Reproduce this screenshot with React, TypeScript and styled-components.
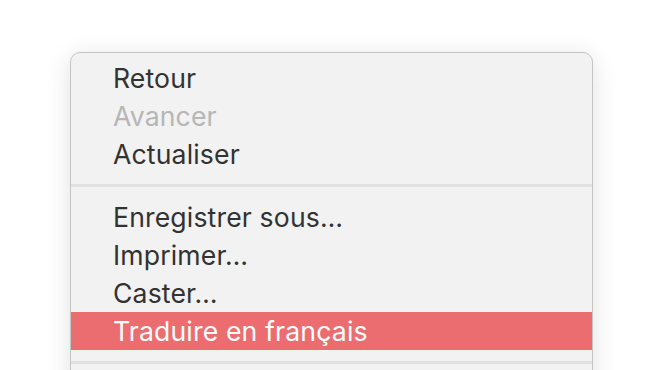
import React from "react";
import styled, { createGlobalStyle } from "styled-components";

const GlobalStyle = createGlobalStyle`
  html, body {
    margin: 0;
    padding: 0;
    background: #ffffff;
    overflow: hidden;
  }
  body {
    font-family: Inter, "Noto Sans", "Liberation Sans", sans-serif;
  }
`;

type Entry = { label: string; disabled?: boolean; active?: boolean } | "sep";

const entries: Entry[] = [
  { label: "Retour" },
  { label: "Avancer", disabled: true },
  { label: "Actualiser" },
  "sep",
  { label: "Enregistrer sous…" },
  { label: "Imprimer…" },
  { label: "Caster…" },
  { label: "Traduire en français", active: true },
  "sep",
];

function App() {
  return (
    <>
      <GlobalStyle />
      <Page>
        <Menu>
          {entries.map((el, i) =>
            el === "sep" ? (
              <Separator key={i} />
            ) : (
              <Item key={i} $disabled={el.disabled} $active={el.active}>
                {el.label}
              </Item>
            )
          )}
        </Menu>
      </Page>
    </>
  );
}

export default App;

const Page = styled.div`
  padding: 52px 0 0 70px;
  height: 370px;
  box-sizing: border-box;
`;

const Menu = styled.div`
  width: 523px;
  min-height: 360px;
  box-sizing: border-box;
  background: #f2f2f2;
  border: 1px solid #c4c4c4;
  border-radius: 10px;
  padding: 6px 0;
  box-shadow: 0 4px 24px rgba(0, 0, 0, 0.12);
  display: flex;
  flex-direction: column;
`;

const Item = styled.div<{ $disabled?: boolean; $active?: boolean }>`
  height: 38px;
  display: flex;
  align-items: center;
  padding-left: 42px;
  font-size: 26.6px;
  letter-spacing: 0.15px;
  color: ${(p) => (p.$active ? "#ffffff" : p.$disabled ? "#b6b6b6" : "#323232")};
  background: ${(p) => (p.$active ? "#ec6d70" : "transparent")};
  white-space: nowrap;
`;

const Separator = styled.div`
  height: 3px;
  margin: 11px 0;
  background: #e1e1e1;
`;
